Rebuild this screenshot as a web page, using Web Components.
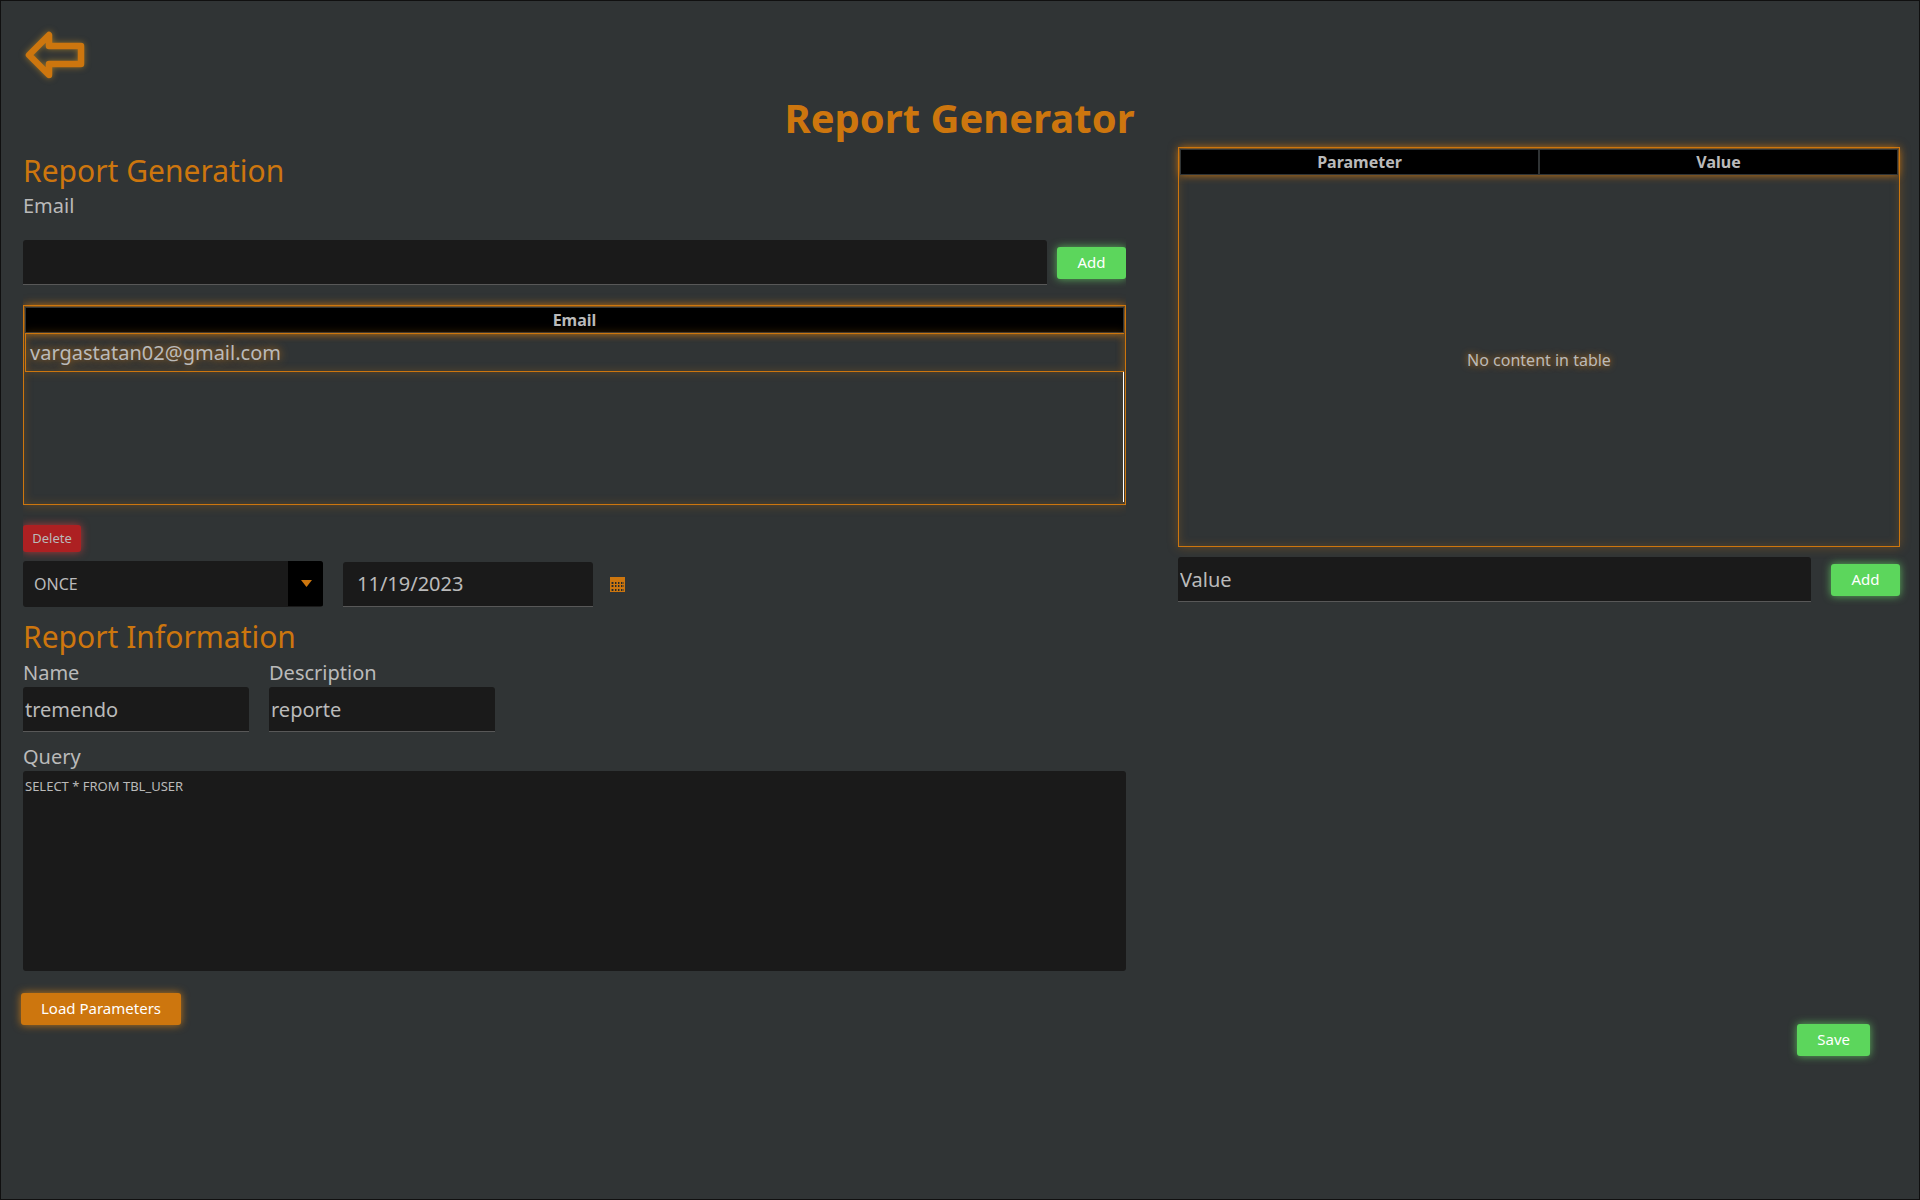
<!DOCTYPE html>
<html lang="en">
<head>
<meta charset="utf-8">
<title>Report Generator</title>
<style>
  :root {
    --bg: #303435;
    --field: #1a1a1a;
    --line: #585858;
    --text: #bababa;
    --orange: #cd760e;
    --glow: rgba(205, 118, 14, .35);
    --green: #5cd65c;
    --red: #ad2022;
  }
  html { height: 100%; }
  body {
    margin: 0;
    min-height: 100%;
    display: flex;
    background: var(--bg);
    color: var(--text);
    font-family: "Noto Sans", sans-serif;
    font-size: 20px;
    line-height: 28px;
  }
</style>
</head>
<body>
<report-page></report-page>

<script>
const define = (name, html, setup) => {
  const template = document.createElement('template');
  template.innerHTML = html;
  customElements.define(name, class extends HTMLElement {
    connectedCallback() {
      if (this.shadowRoot) return;
      const root = this.attachShadow({ mode: 'open' });
      root.append(template.content.cloneNode(true));
      if (setup) setup(this, root);
    }
  });
};

define('back-arrow', `
  <style>
    :host { display: block; }
    button { display: block; padding: 0; border: 0; background: none; cursor: pointer; }
    svg { display: block; overflow: visible; filter: drop-shadow(0 0 3px rgba(205, 150, 40, .6)); }
  </style>
  <button aria-label="Back">
    <svg width="64" height="48" viewBox="0 0 64 48">
      <path d="M6 24 26 4V15H58V33H26V44Z" fill="none" stroke="#cd760e" stroke-width="6.500" stroke-linejoin="round"/>
    </svg>
  </button>`);

define('glow-button', `
  <style>
    :host { display: block; }
    button {
      display: block; height: 32px; min-width: 69px; padding: 0 20px 2px; border: 0; border-radius: 3px;
      font: 15px/30px "Noto Sans", sans-serif; color: #fff; background: var(--green);
      box-shadow: 0 0 8px rgba(105, 220, 105, .75); white-space: nowrap; cursor: pointer;
    }
    :host([kind="primary"]) button { background: var(--orange); box-shadow: 0 0 9px rgba(225, 135, 20, .8); }
    :host([kind="danger"]) button {
      height: 27px; min-width: 58px; padding: 0 9px; font-size: 13px; line-height: 27px;
      color: var(--text); background: var(--red); box-shadow: 0 0 8px rgba(215, 60, 60, .75);
    }
  </style>
  <button><slot></slot></button>`);

define('text-field', `
  <style>
    :host { display: block; min-width: 0; }
    label { display: block; line-height: 29px; }
    label:empty { display: none; }
    input {
      display: block; box-sizing: border-box; width: 100%; height: 45px; padding: 0 2px;
      border: 0; border-bottom: 1px solid var(--line); border-radius: 3px 3px 0 0;
      background: var(--field); color: var(--text); font: 20px "Noto Sans", sans-serif; outline: 0;
    }
    input::placeholder { color: var(--text); opacity: 1; }
    :host([inset]) input { padding: 0 14px; }
  </style>
  <label for="f"></label><input id="f" type="text">`,
  (host, root) => {
    const input = root.querySelector('input');
    root.querySelector('label').textContent = host.getAttribute('label') || '';
    input.value = host.getAttribute('value') || '';
    input.placeholder = host.getAttribute('hint') || '';
    if (host.hasAttribute('name')) input.setAttribute('aria-label', host.getAttribute('name'));
  });

define('query-area', `
  <style>
    :host { display: block; }
    label { display: block; line-height: 29px; }
    textarea {
      display: block; box-sizing: border-box; width: 100%; height: 200px; padding: 6px 2px;
      border: 0; border-radius: 3px; resize: none; outline: 0;
      background: var(--field); color: var(--text); font: 13px/18px "Noto Sans", sans-serif;
    }
  </style>
  <label for="q">Query</label><textarea id="q" spellcheck="false">SELECT * FROM TBL_USER</textarea>`);

define('frequency-select', `
  <style>
    :host { display: grid; width: 300px; height: 46px; background: var(--field); border-radius: 3px; overflow: hidden; }
    select {
      grid-area: 1 / 1; appearance: none; border: 0; outline: 0; padding: 0 11px; background: none;
      color: var(--text); font: 16px "Noto Sans", sans-serif;
    }
    span {
      grid-area: 1 / 1; justify-self: end; display: flex; align-items: center; justify-content: center;
      width: 35px; height: 45px; background: #000; pointer-events: none;
    }
    svg { display: block; }
  </style>
  <select aria-label="Frequency"><option>ONCE</option></select>
  <span><svg width="12" height="7"><path d="M1 0H12L6.500 7Z" fill="#cd760e"/></svg></span>`);

define('date-field', `
  <style>
    :host { display: flex; align-items: center; gap: 17px; }
    text-field { width: 250px; }
    button { display: block; padding: 0; border: 0; background: none; cursor: pointer; }
    svg { display: block; }
  </style>
  <text-field inset name="Date" value="11/19/2023"></text-field>
  <button aria-label="Pick a date">
    <svg width="15" height="15" shape-rendering="crispEdges">
      <path d="M0 0H15V15H0Z" fill="#cd760e"/>
      <path d="M1 6H14M1 9H14M1 12.500H14" stroke="#303334" stroke-opacity=".5" stroke-width="2"/>
      <path d="M2 6H14M2 9H14M2 12.500H14" stroke="#252829" stroke-width="2" stroke-dasharray="1 2"/>
      <path d="M4.500 5V14M7.500 5V14M10.500 5V14" stroke="#cd760e" stroke-width="1"/>
    </svg>
  </button>`);

define('data-table', `
  <style>
    :host {
      display: flex; flex-direction: column; box-sizing: border-box; padding: 1px;
      border: 1px solid var(--orange);
      box-shadow: 0 0 10px var(--glow), inset 0 0 10px rgba(205, 118, 14, .25);
    }
    table { width: 100%; border-collapse: separate; border-spacing: 0; table-layout: fixed; }
    thead tr { box-shadow: 0 0 9px var(--orange); }
    th {
      height: 26px; box-sizing: border-box; padding: 0; border: 1px solid var(--bg);
      background: #000; color: var(--text); font-size: 16px; line-height: 24px; font-weight: 700;
    }
    td {
      height: 39px; box-sizing: border-box; padding: 0 4px; border: 1px solid var(--orange); border-right: 0;
      line-height: 36px; text-shadow: 0 0 8px var(--orange);
      box-shadow: 0 0 9px rgba(205, 118, 14, .3), inset 0 0 9px rgba(205, 118, 14, .25);
    }
    .rest {
      flex: 1; display: flex; align-items: center; justify-content: center;
      font-size: 16px; text-shadow: 0 0 7px var(--orange);
    }
    :host([rows]) .rest { border-right: 1px solid #fff; margin-bottom: 1px; }
  </style>
  <table><thead><tr></tr></thead><tbody></tbody></table>
  <div class="rest"></div>`,
  (host, root) => {
    for (const title of host.getAttribute('columns').split(',')) {
      const th = document.createElement('th');
      th.textContent = title;
      root.querySelector('thead tr').append(th);
    }
    if (host.hasAttribute('rows')) {
      const td = root.querySelector('tbody').insertRow().insertCell();
      td.textContent = host.getAttribute('rows');
    } else {
      root.querySelector('.rest').textContent = 'No content in table';
    }
  });

define('report-page', `
  <style>
    :host {
      flex: 1; box-sizing: border-box; min-width: 0; border: 1px solid #101010;
      display: flex; flex-direction: column; padding: 30px 19px 0 22px;
    }
    h1 { margin: 11px 0 1px; text-align: center; font-size: 40px; line-height: 56px; color: var(--orange); padding-right: 4px; }
    h2 { margin: 0; font-size: 30px; line-height: 42px; font-weight: 400; color: var(--orange); }
    .columns { display: grid; grid-template-columns: 1103fr 722fr; gap: 52px; align-items: start; }
    .left { display: flex; flex-direction: column; min-width: 0; padding-top: 3px; overflow-x: clip; }
    .right { display: flex; flex-direction: column; gap: 10px; min-width: 0; }
    .row { display: flex; align-items: center; gap: 20px; }
    .row > .grow { flex: 1; }
    .add { gap: 10px; margin-top: 20px; }
    .schedule { margin: 9px 0; }
    .fields { margin-bottom: 10px; }
    .emails { height: 200px; margin: 20px 0; }
    .params { height: 400px; }
    .fields > text-field { width: 226px; }
    .foot { display: flex; flex-direction: column; align-items: flex-start; }
    .load { margin: 22px 0 0 -2px; }
    .save { align-self: flex-end; margin: -1px 30px 0 0; }
  </style>
  <back-arrow></back-arrow>
  <h1>Report Generator</h1>
  <div class="columns">
    <section class="left">
      <h2>Report Generation</h2>
      <div>Email</div>
      <div class="row add">
        <text-field class="grow" name="Email"></text-field>
        <glow-button>Add</glow-button>
      </div>
      <data-table class="emails" columns="Email" rows="vargastatan02@gmail.com"></data-table>
      <div class="row"><glow-button kind="danger">Delete</glow-button></div>
      <div class="row schedule">
        <frequency-select></frequency-select>
        <date-field></date-field>
      </div>
      <h2>Report Information</h2>
      <div class="row fields">
        <text-field label="Name" value="tremendo"></text-field>
        <text-field label="Description" value="reporte"></text-field>
      </div>
      <query-area></query-area>
    </section>
    <section class="right">
      <data-table class="params" columns="Parameter,Value"></data-table>
      <div class="row">
        <text-field class="grow" name="Value" hint="Value"></text-field>
        <glow-button>Add</glow-button>
      </div>
    </section>
  </div>
  <div class="foot">
    <glow-button class="load" kind="primary">Load Parameters</glow-button>
    <glow-button class="save">Save</glow-button>
  </div>`);
</script>
</body>
</html>
